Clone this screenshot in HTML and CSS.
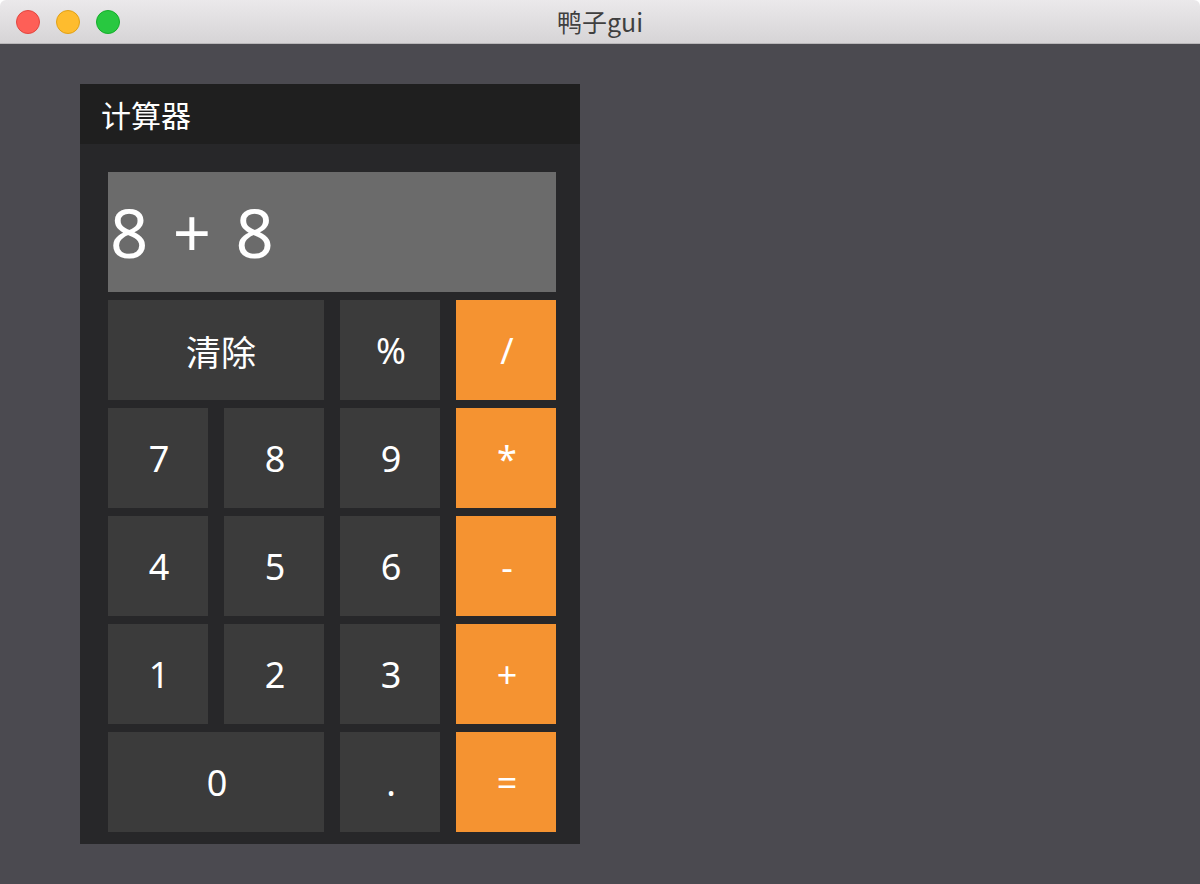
FILE: index.html
```html
<!DOCTYPE html>
<html lang="zh">
<head>
<meta charset="utf-8">
<title>鸭子gui</title>
<link rel="stylesheet" href="styles.css">
</head>
<body>
<div class="window">
  <div class="titlebar">
    <div class="lights">
      <span class="light red"></span>
      <span class="light yellow"></span>
      <span class="light green"></span>
    </div>
    <div class="title">鸭子gui</div>
  </div>
  <div class="content">
    <div class="calc">
      <div class="calc-header">计算器</div>
      <div class="calc-body">
        <div class="display">8 + 8</div>
        <div class="key wide cjk">清除</div>
        <div class="key">%</div>
        <div class="key op">/</div>
        <div class="key">7</div>
        <div class="key">8</div>
        <div class="key">9</div>
        <div class="key op">*</div>
        <div class="key">4</div>
        <div class="key">5</div>
        <div class="key">6</div>
        <div class="key op">-</div>
        <div class="key">1</div>
        <div class="key">2</div>
        <div class="key">3</div>
        <div class="key op">+</div>
        <div class="key wide">0</div>
        <div class="key">.</div>
        <div class="key op">=</div>
      </div>
    </div>
  </div>
</div>
</body>
</html>
```

FILE: styles.css
```css
html, body {
  margin: 0;
  padding: 0;
  background: #ffffff;
}
body {
  font-family: "Noto Sans", "Noto Sans CJK SC", sans-serif;
}
.window {
  width: 1200px;
  height: 884px;
  display: flex;
  flex-direction: column;
  border-radius: 6px 6px 0 0;
  overflow: hidden;
}
.titlebar {
  height: 43px;
  flex: 0 0 43px;
  border-bottom: 1px solid #b9b7b9;
  background: linear-gradient(#ebe9eb, #d6d4d6);
  display: flex;
  align-items: center;
  justify-content: center;
  position: relative;
}
.lights {
  position: absolute;
  left: 16px;
  top: 10px;
  display: flex;
  gap: 16px;
}
.light {
  width: 22px;
  height: 22px;
  border-radius: 50%;
  border: 1px solid;
}
.red { background: #fe5f57; border-color: #e2463f; }
.yellow { background: #febc2e; border-color: #e1a116; }
.green { background: #28c840; border-color: #14ae2a; }
.title {
  font-family: "Noto Sans CJK SC", "Noto Sans", sans-serif;
  font-size: 25px;
  color: #3f3f3f;
  line-height: 1;
}
.content {
  flex: 1;
  background: #4b4a50;
  padding: 40px 0 0 80px;
}
.calc {
  width: 500px;
  background: #272729;
}
.calc-header {
  height: 60px;
  background: #1f1f1f;
  color: #ffffff;
  font-family: "Noto Sans CJK SC", sans-serif;
  font-size: 30px;
  line-height: 60px;
  padding-left: 21px;
}
.calc-body {
  padding: 28px 24px 12px 28px;
  display: grid;
  grid-template-columns: repeat(4, 100px);
  grid-template-rows: 120px repeat(5, 100px);
  column-gap: 16px;
  row-gap: 8px;
}
.display {
  grid-column: 1 / 5;
  background: #6b6b6b;
  color: #ffffff;
  font-size: 67px;
  word-spacing: 7px;
  display: flex;
  align-items: center;
  padding-left: 2px;
  white-space: pre;
}
.key {
  background: #3b3b3b;
  color: #ffffff;
  font-size: 36px;
  display: flex;
  align-items: center;
  justify-content: center;
  padding-left: 2px;
}
.key.cjk {
  padding-left: 10px;
  font-size: 35px;
}
.key.wide {
  grid-column: span 2;
}
.key.op {
  background: #f59331;
}
```
